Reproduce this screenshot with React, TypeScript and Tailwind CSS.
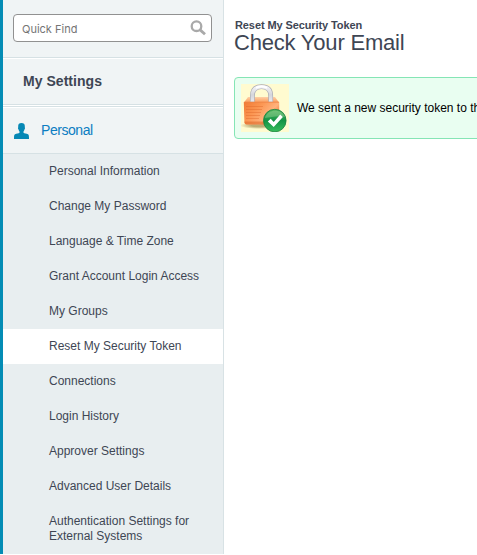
const links = [
  'Personal Information',
  'Change My Password',
  'Language & Time Zone',
  'Grant Account Login Access',
  'My Groups',
  'Reset My Security Token',
  'Connections',
  'Login History',
  'Approver Settings',
  'Advanced User Details',
  'Authentication Settings for External Systems',
];

function SearchIcon() {
  return (
    <svg className="size-4 shrink-0" viewBox="0 0 16 16" fill="none" stroke="#a9a9a9">
      <circle cx="6.5" cy="6.2" r="4.8" strokeWidth="2.3" />
      <path d="M9.8 9.600L15 14.200" strokeWidth="2.8" />
    </svg>
  );
}

function PersonIcon() {
  return (
    <svg className="h-4 w-[15px] shrink-0" viewBox="0 0 15 16" fill="#0688b5">
      <path d="M7.500 0C5.200 0 4.200 1.100 4.200 3v1.500c-.4.2-.3 1.300.2 1.700.2 1.100.7 1.800 1.100 2.300v1.300C4.700 10.500 2.600 10.700 1 11.300.2 11.700 0 12.500 0 16h15c0-3.500-.2-4.300-1-4.700-1.600-.6-3.700-.8-4.500-1.500V8.500c.4-.5.900-1.200 1.100-2.300.5-.4.600-1.500.2-1.700V3c0-1.900-1-3-3.300-3z" />
    </svg>
  );
}

function LockIcon() {
  return (
    <svg className="size-12 shrink-0" viewBox="0 0 48 48">
      <defs>
        <linearGradient id="body" x1="0" y1="0" x2="1" y2="0.6">
          <stop offset="0" stopColor="#f07a35" />
          <stop offset="0.4" stopColor="#fb9551" />
          <stop offset="0.75" stopColor="#ffb27c" />
          <stop offset="1" stopColor="#f07330" />
        </linearGradient>
        <linearGradient id="top" x1="0" y1="0" x2="0" y2="1">
          <stop offset="0" stopColor="#ffd0a6" />
          <stop offset="1" stopColor="#f99c5c" />
        </linearGradient>
        <linearGradient id="steel" x1="0" y1="0" x2="0" y2="1">
          <stop offset="0" stopColor="#f2f2f5" />
          <stop offset="0.55" stopColor="#d4d5db" />
          <stop offset="1" stopColor="#e8e8ed" />
        </linearGradient>
        <linearGradient id="green" x1="0" y1="0" x2="0" y2="1">
          <stop offset="0" stopColor="#58b864" />
          <stop offset="0.5" stopColor="#149345" />
          <stop offset="1" stopColor="#39bf5e" />
        </linearGradient>
        <radialGradient id="shadow">
          <stop offset="0.4" stopColor="#a08c50" stopOpacity="0.7" />
          <stop offset="1" stopColor="#a08c50" stopOpacity="0" />
        </radialGradient>
      </defs>
      <rect width="48" height="48" fill="#fffbd0" />
      <ellipse cx="18" cy="41.500" rx="19" ry="3.500" fill="url(#shadow)" />
      <path d="M7 13h27l4 5.500H3z" fill="url(#top)" />
      <path d="M2.800 18h35.400v20.500q0 2-2 2L5.600 40.500q-2 0-2.200-2z" fill="url(#body)" />
      <path d="M3 18.200h35" stroke="#ee8445" strokeWidth="0.8" />
      <path d="M3.500 37.500h22v3H5.600q-2 0-2.100-3z" fill="#dc6424" opacity="0.55" />
      <path d="M5 22.500h17M5 25.500h16M5 28.500h15M5 31.500h14M5 34.500h13" stroke="#dd6326" strokeWidth="0.7" opacity="0.55" />
      <path d="M11.400 17.500V12C11.400 5.500 14.500 2.700 20.500 2.700S29.700 5.500 29.700 12V17.500" fill="none" stroke="#aaabb2" strokeWidth="4.800" />
      <path d="M11.400 17.500V12C11.400 5.500 14.500 2.700 20.500 2.700S29.700 5.500 29.700 12V17.500" fill="none" stroke="url(#steel)" strokeWidth="3.500" />
      <path d="M15 3.800q5.500-2.400 11 0" fill="none" stroke="#fff" strokeWidth="2" />
      <circle cx="33.800" cy="36.600" r="11.300" fill="url(#green)" stroke="#16803d" strokeWidth="0.8" />
      <path d="M24 34c2-9 17-10 20-1-6-2-14 0-20 1z" fill="#b5dfaa" opacity="0.35" />
      <path d="M26.800 37.500l2.900-2.800 3 3.200 6.500-7.400 2.700 2.500-9.200 10z" fill="#fff" />
    </svg>
  );
}

export default function App() {
  return (
    <div className="flex h-[555px] w-[477px] overflow-hidden bg-white font-['Liberation_Sans',Arial,sans-serif] text-[#3e4654]">
      <aside className="h-[554px] w-56 shrink-0 overflow-hidden border-r border-l-3 border-r-[#d8e2e5] border-l-[#048cb5] bg-[#f0f4f5]">
        <div className="h-[58px] border-b border-[#d6e1e4] px-2.5 pt-3.5">
          <div className="flex h-7 w-[199px] items-center justify-between rounded-[4px] border border-[#919191] bg-white pr-[5px] pl-2 font-['Inter',sans-serif] text-[11px] text-[#757575]">
            <span className="pt-0.5">Quick Find</span>
            <SearchIcon />
          </div>
        </div>
        <h2 className="h-[47px] border-t border-b border-t-white border-b-[#d6e1e4] pt-[13px] pl-5 text-[14px] leading-[18px] font-bold tracking-[0.04px]">My Settings</h2>
        <div className="h-px bg-white" />
        <div className="h-px bg-[#d6e1e4]" />
        <div className="flex h-[47px] items-center gap-3 border-t border-b border-t-white border-b-[#d6e1e4] pl-[11px] text-[14px] text-[#0b7dc2]">
          <PersonIcon />
          <span className="tracking-[-0.45px]">Personal</span>
        </div>
        <nav className="h-[400px] bg-[#e8eef0] text-[12px] leading-[15px]">
          {links.map((label) => (
            <div key={label} className={`min-h-[35px] py-[10px] pr-4 pl-[46px] ${label === 'Reset My Security Token' ? 'bg-white' : ''}`}>
              {label}
            </div>
          ))}
        </nav>
      </aside>
      <main className="min-w-0 flex-1 overflow-hidden pt-[18px] pl-2.5">
        <h1 className="flex flex-col">
          <span className="pl-px text-[11px] leading-[14px] font-bold tracking-[-0.1px]">Reset My Security Token</span>
          <span className="text-[22px] leading-[22px] tracking-[-0.2px]">Check Your Email</span>
        </h1>
        <section className="mt-[23px] flex h-[62px] w-[300px] items-center gap-2 rounded-[4px] border border-[#85e5b5] bg-[#e9fef1] pl-1.5 text-[12px] whitespace-nowrap text-black">
          <LockIcon />
          <span>We sent a new security token to the</span>
        </section>
      </main>
    </div>
  );
}
